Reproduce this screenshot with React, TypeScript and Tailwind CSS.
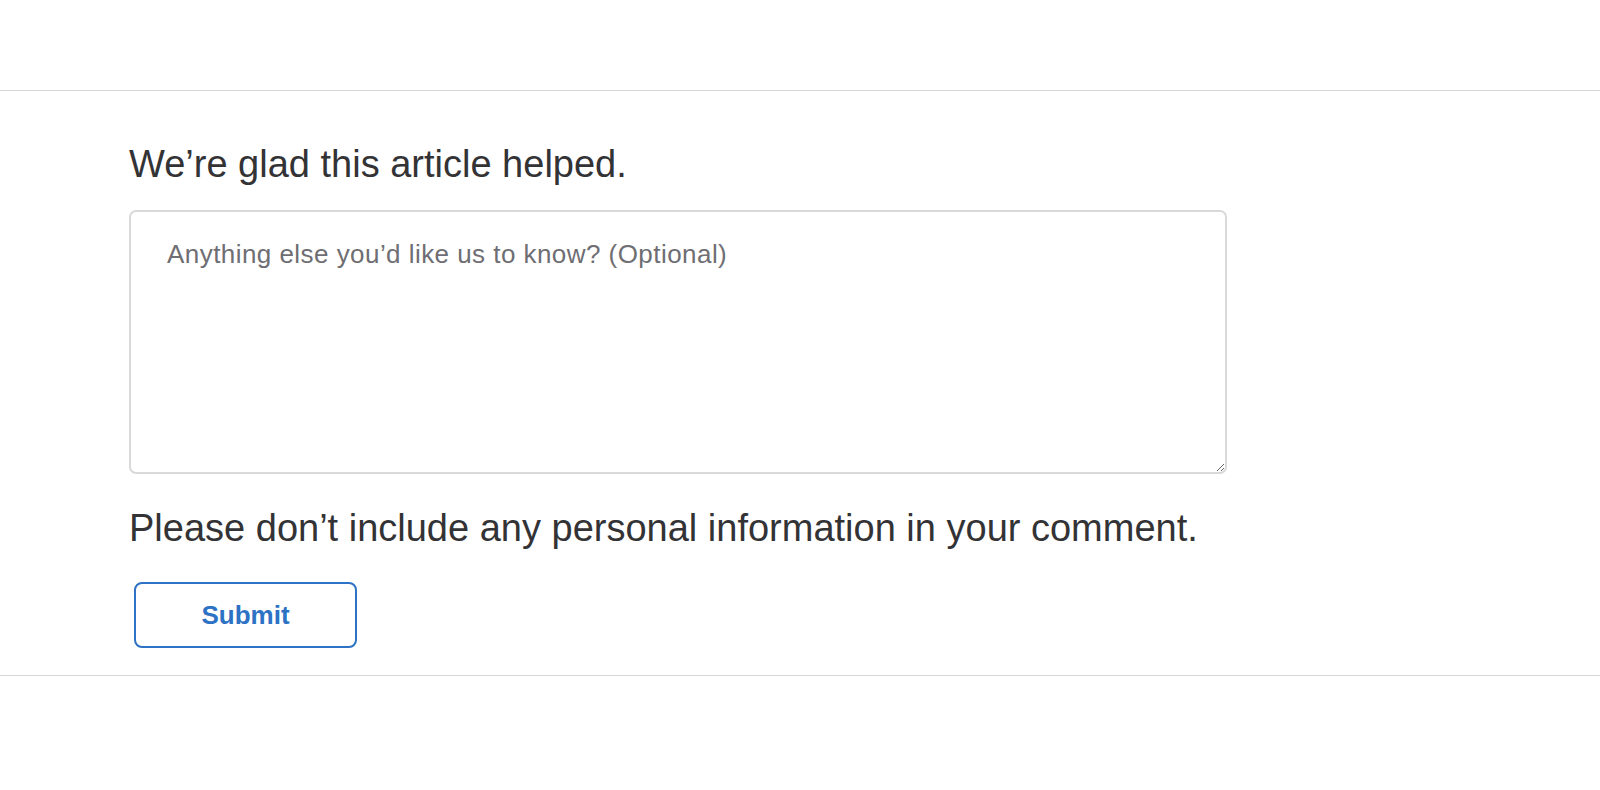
export default function App() {
  return (
    <div className="min-h-screen bg-white font-['Liberation_Sans',Arial,sans-serif] text-[#333336]">
      <div className="h-[91px] border-b-[1.5px] border-[#d6d6d6]" />

      <section className="px-[129px] pt-[50px] pb-[27px]">
        <h2 className="text-[38px] leading-[46px] font-normal">We’re glad this article helped.</h2>

        <textarea
          className="mt-[23px] block h-[264px] w-[1098px] resize rounded-[7px] border-2 border-[#d9d9d9] bg-white pl-[36px] pr-6 pt-[23px] text-[26px] leading-[39px] tracking-[0.45px] text-[#333336] placeholder:text-[#6e6e73] focus:outline-none"
          placeholder="Anything else you’d like us to know? (Optional)"
        />

        <p className="mt-[31px] text-[38px] leading-[46px]">
          Please don’t include any personal information in your comment.
        </p>

        <button
          type="button"
          className="mt-[31px] ml-[5px] flex h-[66px] w-[223px] items-center justify-center rounded-[8px] border-2 border-[#2d72c4] bg-white text-[26px] font-bold text-[#2d72c4]"
        >
          Submit
        </button>
      </section>

      <div className="border-t-[1.5px] border-[#d6d6d6]" />
    </div>
  );
}
